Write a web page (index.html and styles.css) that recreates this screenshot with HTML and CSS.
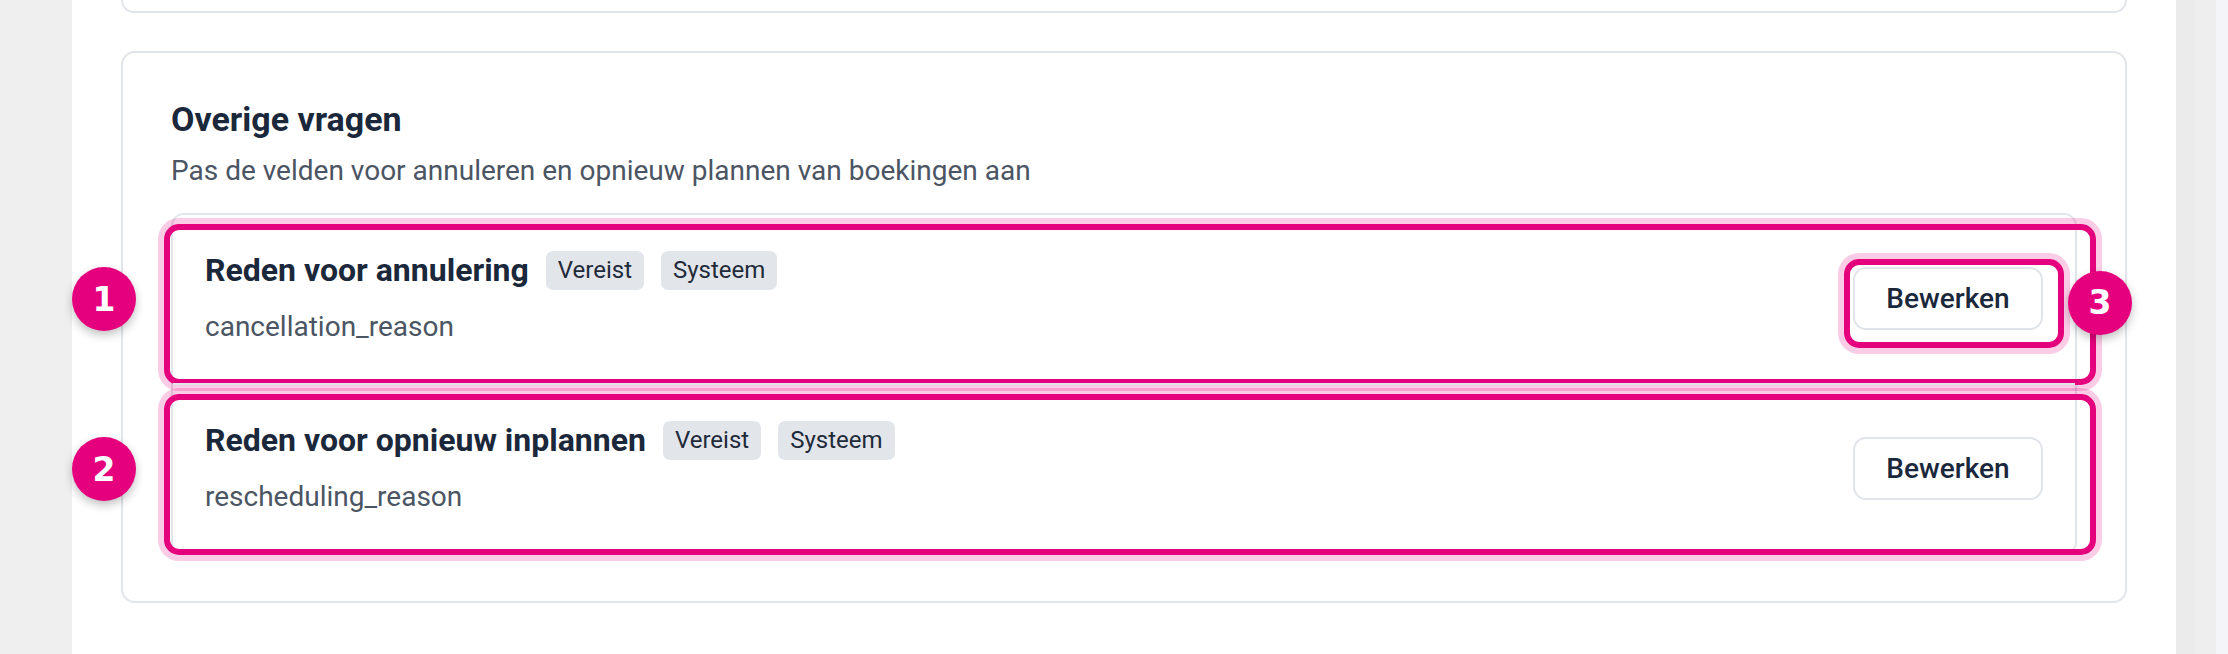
FILE: index.html
```html
<!DOCTYPE html>
<html lang="nl">
<head>
  <meta charset="UTF-8" />
  <title>Boekingsvragen</title>
  <meta name="viewport" content="width=device-width, initial-scale=1.0" />
  <link rel="stylesheet" href="styles.css">
</head>
<body>

<div class="gutter-left"></div>

<main class="panel">
  <div class="card card-prev"></div>

  <section class="card">
    <h2 class="card-title">Overige vragen</h2>
    <p class="card-sub">Pas de velden voor annuleren en opnieuw plannen van boekingen aan</p>

    <div class="list">
      <div class="row">
        <span class="mark"></span>
        <span class="badge">1</span>
        <div class="row-info">
          <div class="row-head">
            <h3>Reden voor annulering</h3>
            <span class="tag">Vereist</span>
            <span class="tag">Systeem</span>
          </div>
          <p class="row-key">cancellation_reason</p>
        </div>
        <div class="btn-wrap">
          <span class="mark mark-btn"></span>
          <button class="btn" type="button">Bewerken</button>
          <span class="badge badge-btn">3</span>
        </div>
      </div>

      <div class="row">
        <span class="mark"></span>
        <span class="badge">2</span>
        <div class="row-info">
          <div class="row-head">
            <h3>Reden voor opnieuw inplannen</h3>
            <span class="tag">Vereist</span>
            <span class="tag">Systeem</span>
          </div>
          <p class="row-key">rescheduling_reason</p>
        </div>
        <div class="btn-wrap">
          <button class="btn" type="button">Bewerken</button>
        </div>
      </div>
    </div>
  </section>
</main>

<div class="gutter-right"></div>
<div class="track"></div>

</body>
</html>
```

FILE: styles.css
```css
* { box-sizing: border-box; }

body {
  margin: 0;
  height: 654px;
  overflow: hidden;
  display: flex;
  background: #efefef;
  font-family: Roboto, "Liberation Sans", sans-serif;
  color: #1b283b;
}

.gutter-left { width: 72px; flex: none; background: #efefef; }

.gutter-right {
  width: 40px;
  flex: none;
  background: linear-gradient(to right, #ebebeb 19px, #eeeeee 19px);
}

.track { width: 12px; flex: none; background: #f4f5f8; }

.panel {
  width: 2104px;
  flex: none;
  background: #fff;
  padding: 0 49px;
}

.card {
  position: relative;
  border: 2px solid #e2e5e9;
  border-radius: 14px;
  padding: 44px 48px 46px;
  margin-top: 38px;
}

.card-prev {
  height: 13px;
  margin-top: 0;
  padding: 0;
  border-top: none;
  border-radius: 0 0 14px 14px;
}

.card-title {
  margin: 0;
  font-size: 34px;
  line-height: 44px;
  font-weight: 700;
}

.card-sub {
  margin: 10px 0 0;
  font-size: 28px;
  line-height: 40px;
  color: #4b5563;
}

.list {
  margin-top: 22px;
  border: 2px solid #e2e5e9;
  border-radius: 13px;
}

.row {
  position: relative;
  display: flex;
  align-items: center;
  justify-content: space-between;
  padding: 33px 32px 35px;
}

.row + .row { border-top: 2px solid #e2e5e9; }

.row-head {
  display: flex;
  align-items: center;
  gap: 17px;
}

.row-head h3 {
  margin: 0;
  font-size: 32px;
  line-height: 44px;
  font-weight: 700;
}

.tag {
  display: inline-flex;
  align-items: center;
  height: 39px;
  padding: 0 12px;
  border-radius: 7px;
  background: #e2e5ea;
  font-size: 24px;
  color: #1f2a3a;
}

.row-key {
  margin: 14px 0 0;
  font-size: 28px;
  line-height: 42px;
  color: #4b5563;
}

.btn-wrap { position: relative; }

.btn {
  width: 190px;
  height: 63px;
  border: 2px solid #e1e4e8;
  border-radius: 13px;
  background: #fff;
  font-family: inherit;
  font-size: 28px;
  font-weight: 500;
  color: #1b283b;
}

/* annotation overlay */
.mark {
  position: absolute;
  top: 9px;
  bottom: -2px;
  left: -9px;
  right: -21px;
  border: 6px solid #e5007d;
  border-radius: 15px;
  box-shadow: 0 0 0 6px rgba(229, 0, 125, 0.2);
  pointer-events: none;
}

.mark-btn {
  top: -8px;
  bottom: -18px;
  left: -9px;
  right: -21px;
}

.badge {
  position: absolute;
  left: -101px;
  top: 50%;
  width: 64px;
  height: 64px;
  margin-top: -32px;
  border-radius: 50%;
  background: #e5007d;
  color: #fff;
  display: flex;
  align-items: center;
  justify-content: center;
  font-family: "DejaVu Sans", sans-serif;
  font-weight: 700;
  font-size: 33px;
  box-shadow: 0 4px 10px rgba(0, 0, 0, 0.25);
  z-index: 2;
}

.badge-btn {
  left: calc(100% + 25px);
  top: 4px;
  margin-top: 0;
}
```
